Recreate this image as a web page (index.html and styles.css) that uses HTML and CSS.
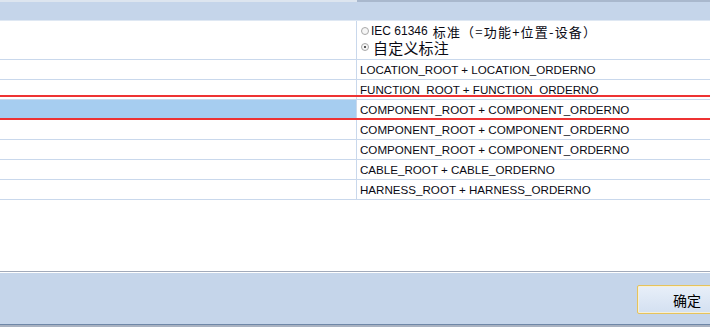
FILE: index.html
```html
<!DOCTYPE html>
<html>
<head>
<meta charset="utf-8">
<link rel="stylesheet" href="styles.css">
</head>
<body>
<div class="frame">
  <div class="topstrip"><div class="ts-left"></div><div class="ts-right"></div></div>
  <div class="header"></div>
  <div class="table">
    <div class="row row-tall">
      <div class="cell-left"></div>
      <div class="cell-right options">
        <label class="opt opt-small"><span class="radio"></span><span class="latin">IEC 61346</span><span class="cjk">标准（=功能+位置-设备）</span></label>
        <label class="opt opt-large"><span class="radio checked"></span>自定义标注</label>
      </div>
    </div>
    <div class="row"><div class="cell-left"></div><div class="cell-right">LOCATION_ROOT + LOCATION_ORDERNO</div></div>
    <div class="row"><div class="cell-left"></div><div class="cell-right">FUNCTION_ROOT + FUNCTION_ORDERNO</div></div>
    <div class="row selected"><div class="cell-left"></div><div class="cell-right">COMPONENT_ROOT + COMPONENT_ORDERNO</div></div>
    <div class="row"><div class="cell-left"></div><div class="cell-right">COMPONENT_ROOT + COMPONENT_ORDERNO</div></div>
    <div class="row"><div class="cell-left"></div><div class="cell-right">COMPONENT_ROOT + COMPONENT_ORDERNO</div></div>
    <div class="row"><div class="cell-left"></div><div class="cell-right">CABLE_ROOT + CABLE_ORDERNO</div></div>
    <div class="row"><div class="cell-left"></div><div class="cell-right">HARNESS_ROOT + HARNESS_ORDERNO</div></div>
  </div>
  <div class="empty"></div>
  <div class="footer">
    <button class="btn">确定</button>
  </div>
  <div class="mark mark-top"></div>
  <div class="mark mark-bottom"></div>
</div>
</body>
</html>
```
FILE: styles.css
```css
* { box-sizing: border-box; }
html, body { margin: 0; padding: 0; }
body {
  width: 710px;
  height: 327px;
  overflow: hidden;
  background: #fff;
  font-family: "Liberation Sans", Arial, "Noto Sans CJK SC", sans-serif;
  color: #000;
}
.frame {
  position: relative;
  width: 710px;
  height: 327px;
  display: flex;
  flex-direction: column;
  overflow: hidden;
}
.topstrip { display: flex; height: 2px; }
.ts-left { width: 357px; background: #dde5ef; }
.ts-right { flex: 1; background: #a9b8cd; }
.header {
  height: 19px;
  background: #c5d5ea;
  border-bottom: 1px solid #dfe8f3;
}
.table { display: flex; flex-direction: column; }
.row {
  display: flex;
  height: 20px;
  border-bottom: 1px solid #c9d8ec;
}
.row-tall { height: 39px; }
.cell-left {
  width: 357px;
  border-right: 1px solid #c9d8ec;
  flex: none;
}
.cell-right {
  flex: 1;
  padding-left: 3px;
  font-size: 11.6px;
  line-height: 19px;
  white-space: nowrap;
  color: #0a0a14;
}
.selected .cell-left { background: #a6cdf0; }
.options {
  display: flex;
  flex-direction: column;
  padding-top: 2px;
  font-family: "Noto Sans CJK SC", sans-serif;
}
.opt {
  display: flex;
  align-items: center;
  height: 16px;
  white-space: nowrap;
}
.opt-small { font-size: 13px; }
.opt-large { font-size: 15px; letter-spacing: 0.2px; }
.latin { font-family: "Liberation Sans", Arial, sans-serif; font-size: 12px; margin-right: 5px; }
.cjk { letter-spacing: 1.2px; }
.radio {
  width: 8px;
  height: 8px;
  border-radius: 50%;
  border: 1px solid #a8a8a8;
  background: #f6f6f6;
  margin: 0 2px 0 1px;
  position: relative;
  flex: none;
}
.opt-large .radio { margin-right: 4px; }
.radio.checked::after {
  content: "";
  position: absolute;
  left: 2px;
  top: 2px;
  width: 2px;
  height: 2px;
  background: #222;
  border-radius: 50%;
}
.empty { flex: 1; background: #fff; }
.footer {
  height: 56px;
  flex: none;
  background: #c5d5ea;
  border-top: 1px solid #a2aaba;
  box-shadow: inset 0 1px 0 #ffffff;
  border-bottom: 2px solid #a9b2c1;
  display: flex;
  justify-content: flex-end;
  align-items: flex-start;
  padding-top: 13px;
  position: relative;
}
.footer::after {
  content: "";
  position: absolute;
  left: 0; right: 0; bottom: 0;
  height: 1px;
  background: #6f87a7;
}
.btn {
  width: 100px;
  height: 29px;
  margin-right: -27px;
  border: 1px solid #e6c35c;
  border-radius: 2px;
  background: linear-gradient(#e8eff9, #d3e0f1);
  box-shadow: inset 0 0 0 1px #f6f0d8;
  font-family: "Noto Sans CJK SC", sans-serif;
  font-size: 14px;
  color: #000;
  padding: 0;
}
.mark {
  position: absolute;
  left: 0;
  width: 710px;
  height: 2px;
  background: #ee3333;
}
.mark-top { top: 95px; }
.mark-bottom { top: 118px; }
```
